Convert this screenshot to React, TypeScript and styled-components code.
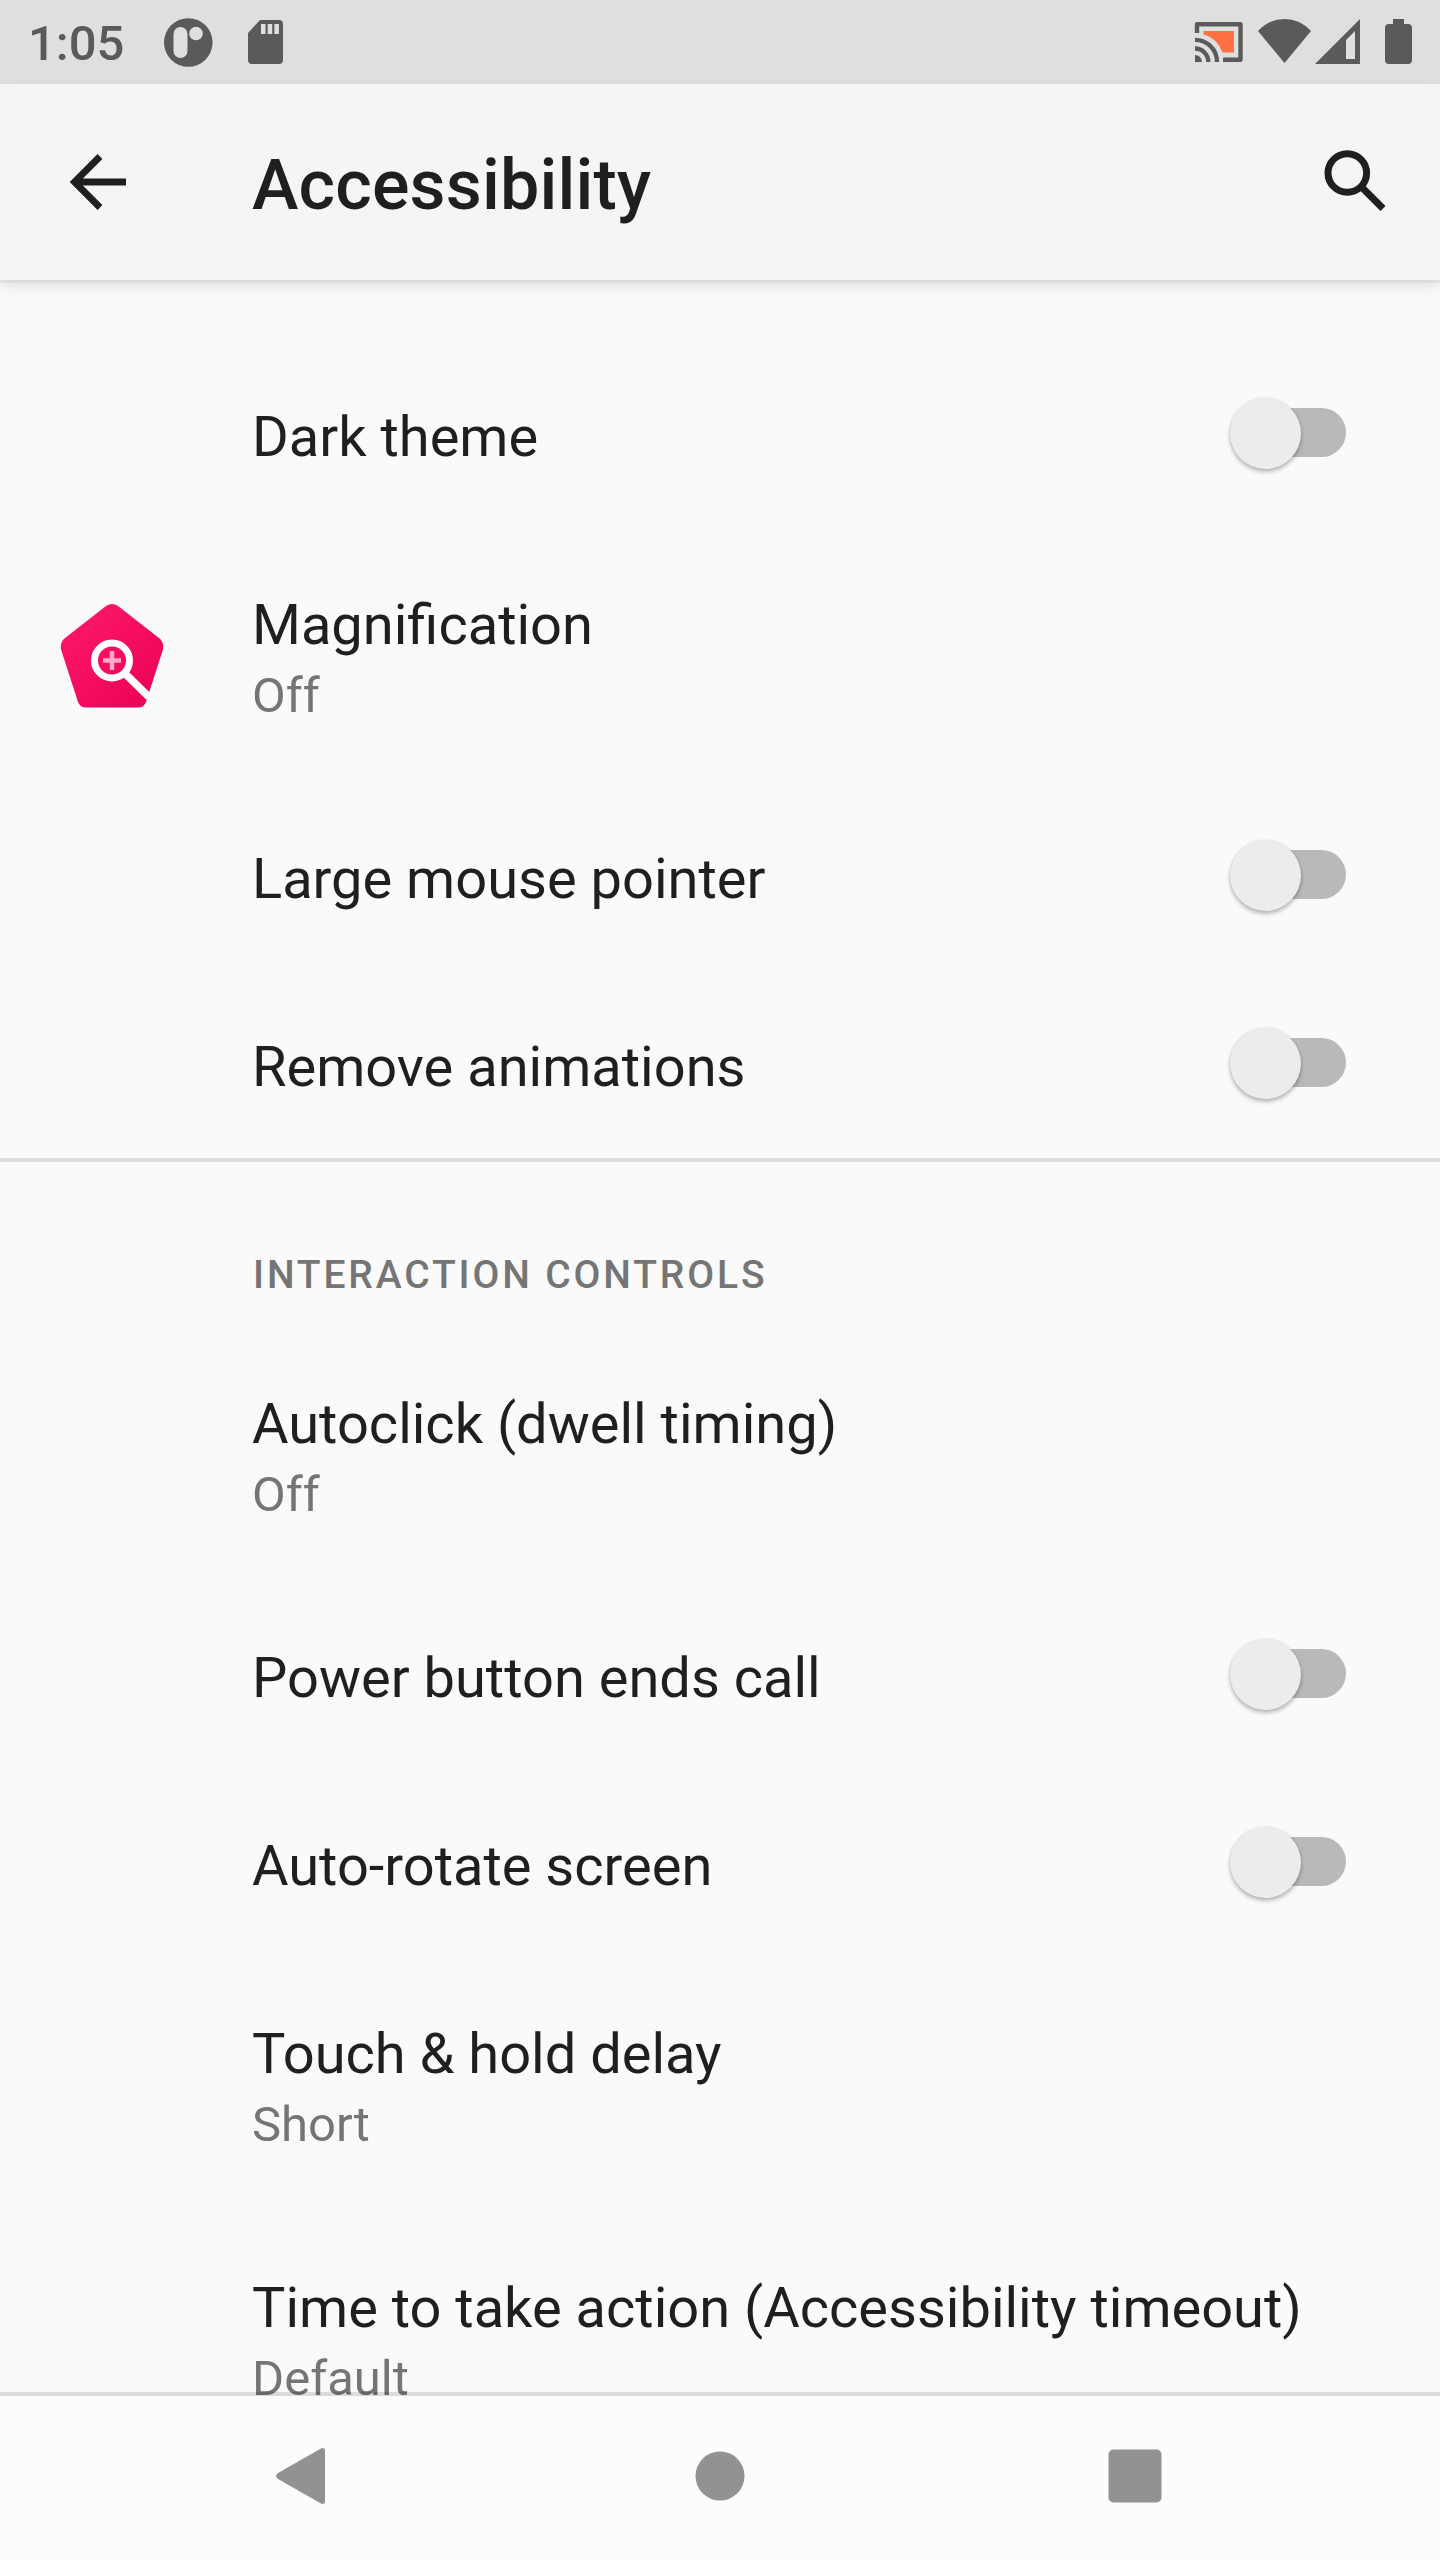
import React from "react";
import styled, { createGlobalStyle } from "styled-components";

const Global = createGlobalStyle`
  html, body { margin: 0; padding: 0; background: #fafafa; }
  * { box-sizing: border-box; }
`;
const Screen = styled.div`
  width: 1440px;
  height: 2560px;
  display: flex;
  flex-direction: column;
  overflow: hidden;
  background: #fafafa;
  font-family: Roboto, "Noto Sans", sans-serif;
  color: #1f1f1f;
`;
const StatusBar = styled.header`
  flex: none;
  height: 84px;
  display: flex;
  align-items: center;
  justify-content: space-between;
  background: #dfdfdf;
`;
const StatusGroup = styled.div`
  display: flex;
  align-items: center;
  height: 84px;
`;
const Clock = styled.span`
  width: 135px;
  margin: 4px 0 0 28px;
  font-size: 49px;
  line-height: 58px;
  font-weight: 500;
  color: #5a5a5a;
`;
const Drawing = styled.svg`
  display: block;
  flex: none;
`;
const AppBar = styled.div`
  flex: none;
  height: 196px;
  display: flex;
  align-items: center;
  padding: 0 37px 0 61px;
  background: #f5f5f5;
  box-shadow: 0 3px 1px rgba(0, 0, 0, 0.05), 0 6px 14px rgba(0, 0, 0, 0.1);
  z-index: 1;
`;
const IconButton = styled.button`
  display: flex;
  padding: 0;
  border: 0;
  background: none;
  color: #1f1f1f;
`;
const PageTitle = styled.h1`
  flex: 1;
  margin: 6px 0 0 107px;
  font-size: 70px;
  line-height: 82px;
  font-weight: 500;
  letter-spacing: 0.15px;
`;
const List = styled.main`
  flex: 1;
  min-height: 0;
  overflow: hidden;
  padding-top: 62px;
`;
const Row = styled.div<{ $tall?: boolean }>`
  height: ${(p) => (p.$tall ? 254 : 188)}px;
  display: flex;
  align-items: center;
  padding-right: 94px;
`;
const IconSlot = styled.div`
  width: 252px;
  flex: none;
  padding: 0 0 5px 56px;
`;
const RowText = styled.div`
  flex: 1;
  padding-top: 2px;
`;
const RowTitle = styled.div`
  font-size: 56px;
  line-height: 66px;
  white-space: nowrap;
`;
const Summary = styled.div`
  margin-top: 9px;
  margin-bottom: -1px;
  font-size: 49px;
  line-height: 58px;
  color: #757575;
`;
const SwitchTrack = styled.div`
  width: 98px;
  height: 49px;
  margin: -7px 0 0;
  border-radius: 25px;
  background: #b9b9b9;
  display: flex;
  align-items: center;
`;
const Thumb = styled.div`
  flex: none;
  width: 71px;
  height: 71px;
  margin: 2px 0 0 -18px;
  border-radius: 50%;
  background: #ececec;
  box-shadow: 0 3px 4px rgba(0, 0, 0, 0.26), 0 0 3px rgba(0, 0, 0, 0.1);
`;
const Divider = styled.hr`
  height: 4px;
  margin: -2px 0 0;
  border: 0;
  background: #dcdcdc;
`;
const SectionHeader = styled.h2`
  margin: 0;
  height: 167px;
  padding: 90px 0 0 253px;
  font-size: 39px;
  line-height: 46px;
  font-weight: 500;
  letter-spacing: 2.85px;
  color: #757575;
`;
const NavBar = styled.nav`
  flex: none;
  height: 168px;
  margin-top: -4px;
  border-top: 4px solid rgba(0, 0, 0, 0.12);
  background: #fcfcfc;
  background-clip: padding-box;
  display: flex;
  align-items: center;
  justify-content: space-between;
  padding: 0 278px 4px 273px;
  z-index: 1;
`;

const MagnificationIcon = () => (
  <Drawing width="108" height="108" viewBox="56 600 108 108">
    <defs>
      <linearGradient id="pink" x1="0" y1="0" x2="1" y2="1">
        <stop offset="0" stopColor="#ff1a6c" />
        <stop offset="1" stopColor="#ea0055" />
      </linearGradient>
    </defs>
    <path d="M106 605Q112 601 118 605L159 637Q165 642 162.500 650L146 701Q144 706.500 138 706.500H86Q80 706.500 78 701L61.500 650Q59 642 65 637Z" fill="url(#pink)" />
    <circle cx="112" cy="659.500" r="17.500" fill="none" stroke="#fff" strokeWidth="7" />
    <path d="M125.500 673L149 696" stroke="#fff" strokeWidth="7.500" />
    <path d="M112 650V669M103 659.500H121" stroke="#ffa9cb" strokeWidth="4.500" />
  </Drawing>
);

type Item = { title: string; summary?: string; toggle?: boolean; icon?: React.ReactNode };

const display: Item[] = [
  { title: "Dark theme", toggle: true },
  { title: "Magnification", summary: "Off", icon: <MagnificationIcon /> },
  { title: "Large mouse pointer", toggle: true },
  { title: "Remove animations", toggle: true },
];
const interaction: Item[] = [
  { title: "Autoclick (dwell timing)", summary: "Off" },
  { title: "Power button ends call", toggle: true },
  { title: "Auto-rotate screen", toggle: true },
  { title: "Touch & hold delay", summary: "Short" },
  { title: "Time to take action (Accessibility timeout)", summary: "Default" },
];

const Preference = ({ title, summary, toggle, icon }: Item) => (
  <Row $tall={!!summary}>
    <IconSlot>{icon}</IconSlot>
    <RowText>
      <RowTitle>{title}</RowTitle>
      {summary && <Summary>{summary}</Summary>}
    </RowText>
    {toggle && (
      <SwitchTrack role="switch" aria-checked="false">
        <Thumb />
      </SwitchTrack>
    )}
  </Row>
);

export default function App() {
  return (
    <Screen>
      <Global />
      <StatusBar>
        <StatusGroup>
          <Clock>1:05</Clock>
          <Drawing width="122" height="84" viewBox="163 0 122 84">
            <circle cx="188.3" cy="42.5" r="24.3" fill="#5a5a5a" />
            <rect x="173.5" y="27" width="14" height="31" rx="7" fill="#dfdfdf" />
            <circle cx="196" cy="33.5" r="6.8" fill="#dfdfdf" />
            <path d="M260 20H279Q283 20 283 24V60Q283 64 279 64H252Q248 64 248 60V33Z" fill="#5a5a5a" />
            <path d="M261 24h4.5v10H261zM267.7 24h4.5v10h-4.5zM274.4 24h4.5v10h-4.5z" fill="#dfdfdf" />
          </Drawing>
        </StatusGroup>
        <StatusGroup>
          <Drawing width="250" height="84" viewBox="1190 0 250 84">
            <path d="M1203.500 31H1234V52.500H1222.500A29 29 0 0 0 1203.500 34.300Z" fill="#ff7043" />
            <path d="M1197 33V24.200H1240.500V59.800H1223" fill="none" stroke="#5a5a5a" strokeWidth="4.400" strokeLinejoin="round" />
            <path d="M1195 39.800A22 22 0 0 1 1217 62M1195 48.500A13.300 13.300 0 0 1 1208.300 62" fill="none" stroke="#5a5a5a" strokeWidth="4.300" />
            <path d="M1195 55A7 7 0 0 1 1202 62H1195Z" fill="#5a5a5a" />
            <path d="M1258 31Q1269 19 1284.500 19Q1300 19 1311 31L1284.500 63Z" fill="#5a5a5a" />
            <path fillRule="evenodd" d="M1360 19V64H1315ZM1355 31L1346 40V59H1355Z" fill="#5a5a5a" />
            <path d="M1393 19H1404V24H1408Q1412 24 1412 28V60Q1412 64 1408 64H1389Q1385 64 1385 60V28Q1385 24 1389 24H1393Z" fill="#5a5a5a" />
          </Drawing>
        </StatusGroup>
      </StatusBar>
      <AppBar>
        <IconButton aria-label="Navigate up">
          <Drawing width="84" height="84" viewBox="61 140 84 84">
            <path d="M126 182H75M100 156.500L74.500 182L100 207.500" fill="none" stroke="#1f1f1f" strokeWidth="6.800" />
          </Drawing>
        </IconButton>
        <PageTitle>Accessibility</PageTitle>
        <IconButton aria-label="Search">
          <Drawing width="84" height="84" viewBox="1319 140 84 84">
            <circle cx="1347.300" cy="173" r="19.300" fill="none" stroke="#1f1f1f" strokeWidth="7" />
            <path d="M1360 185.500L1383 208.500" stroke="#1f1f1f" strokeWidth="7" />
          </Drawing>
        </IconButton>
      </AppBar>
      <List>
        {display.map((i) => <Preference key={i.title} {...i} />)}
        <Divider />
        <SectionHeader>INTERACTION CONTROLS</SectionHeader>
        {interaction.map((i) => <Preference key={i.title} {...i} />)}
      </List>
      <NavBar>
        <Drawing width="59" height="60" viewBox="273 2446 59 60">
          <path d="M321 2448.500Q325 2447 325 2451V2501Q325 2505 321 2503.500L278 2479Q274 2476 278 2473Z" fill="#929292" />
        </Drawing>
        <Drawing width="50" height="50" viewBox="0 0 50 50">
          <circle cx="25" cy="25" r="24.500" fill="#929292" />
        </Drawing>
        <Drawing width="54" height="54" viewBox="0 0 54 54">
          <rect x="0.500" y="0.500" width="53" height="53" rx="5" fill="#929292" />
        </Drawing>
      </NavBar>
    </Screen>
  );
}
